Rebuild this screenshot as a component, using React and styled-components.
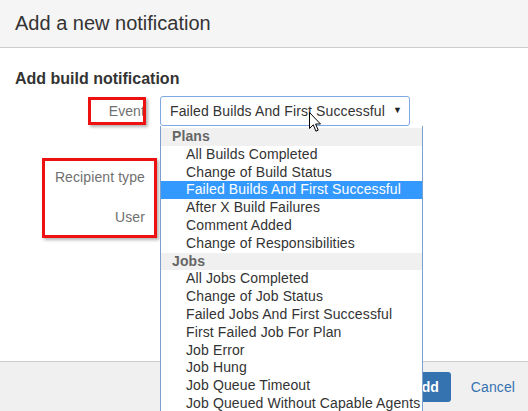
import React from "react";
import styled, { createGlobalStyle } from "styled-components";

const Global = createGlobalStyle`
  html, body { margin: 0; padding: 0; overflow: hidden; background: #fff; }
  body { font-family: "Liberation Sans", Arial, sans-serif; color: #333; }
  * { box-sizing: border-box; }
`;

const Dialog = styled.div`
  height: 411px;
  display: flex;
  flex-direction: column;
  position: relative;
`;

const Header = styled.header`
  height: 48px;
  background: #f5f5f5;
  border-bottom: 1px solid #cccccc;
  padding: 0 15px;
  display: flex;
  align-items: center;
`;

const Title = styled.h1`
  margin: 0;
  font-size: 20px;
  font-weight: normal;
  color: #333;
  line-height: 24px;
  padding-bottom: 2px;
`;

const Body = styled.div`
  flex: 1;
  padding: 21px 15px 0;
`;

const Heading = styled.h2`
  margin: 0 0 7px;
  font-size: 16px;
  font-weight: bold;
  line-height: 20px;
  color: #333;
`;

const Form = styled.div`
  position: relative;
  display: grid;
  grid-template-columns: 130px 1fr;
  column-gap: 15px;
`;

const Label = styled.div`
  text-align: right;
  font-size: 14px;
  letter-spacing: 0.1px;
  color: #707070;
  line-height: 30px;
  height: 30px;
  margin-top: ${(p) => p.$top || 0}px;
`;

const Field = styled.div`
  position: relative;
  height: 30px;
  margin-top: ${(p) => p.$top || 0}px;
`;

const Select = styled.div`
  width: 250px;
  height: 30px;
  border: 1px solid #7fa9e2;
  border-radius: 3px;
  background: #fff;
  display: flex;
  align-items: center;
  justify-content: space-between;
  padding: 0 7px 0 9px;
  font-size: 14px;
  letter-spacing: 0.12px;
  color: #333;
`;

const Arrow = styled.span`
  font-size: 9px;
  color: #222;
  margin-top: -2px;
`;

const Dropdown = styled.ul`
  position: absolute;
  top: 30px;
  left: 0;
  width: 263px;
  margin: 0;
  padding: 0;
  list-style: none;
  background: #fff;
  border: 1px solid #7d9fcf;
  border-top: none;
  z-index: 5;
  font-size: 14px;
  letter-spacing: 0.12px;
`;

const Group = styled.li`
  height: 17.8px;
  line-height: 17.8px;
  padding-left: 11px;
  background: #f0f0f0;
  color: #666;
  font-weight: bold;
  margin-top: ${(p) => (p.$first ? 2 : 0)}px;
`;

const Option = styled.li`
  height: 17.8px;
  line-height: 17.8px;
  padding-left: 25px;
  white-space: nowrap;
  color: ${(p) => (p.$selected ? "#fff" : "#333")};
  background: ${(p) => (p.$selected ? "#3399ff" : "transparent")};
`;

const Annotation = styled.div`
  position: absolute;
  left: ${(p) => p.$x}px;
  top: ${(p) => p.$y}px;
  width: ${(p) => p.$w}px;
  height: ${(p) => p.$h}px;
  border: 3px solid #ee1111;
  box-shadow: 2px 2px 3px rgba(0, 0, 0, 0.3);
  pointer-events: none;
  z-index: 2;
`;

const Cursor = styled.svg`
  position: absolute;
  left: 149px;
  top: 16px;
  z-index: 10;
`;

const Footer = styled.footer`
  height: 50px;
  background: #f0f0f0;
  border-top: 1px solid #cccccc;
  display: flex;
  justify-content: flex-end;
  align-items: flex-start;
  padding: 10px 13px 0 0;
  gap: 10px;
`;

const PrimaryButton = styled.button`
  height: 30px;
  padding: 0 12px;
  border: none;
  border-radius: 3px;
  background: #3572b0;
  color: #fff;
  font-family: "Liberation Sans", Arial, sans-serif;
  font-size: 14px;
  font-weight: bold;
`;

const LinkButton = styled.button`
  height: 30px;
  padding: 0 0 0 10px;
  border: none;
  background: transparent;
  color: #3572b0;
  font-family: "Liberation Sans", Arial, sans-serif;
  font-size: 14px;
  letter-spacing: 0.1px;
`;

const plans = [
  "All Builds Completed",
  "Change of Build Status",
  "Failed Builds And First Successful",
  "After X Build Failures",
  "Comment Added",
  "Change of Responsibilities",
];
const jobs = [
  "All Jobs Completed",
  "Change of Job Status",
  "Failed Jobs And First Successful",
  "First Failed Job For Plan",
  "Job Error",
  "Job Hung",
  "Job Queue Timeout",
  "Job Queued Without Capable Agents",
];

const selected = "Failed Builds And First Successful";

export default function App() {
  return (
    <>
      <Global />
      <Dialog>
        <Header>
          <Title>Add a new notification</Title>
        </Header>
        <Body>
          <Heading>Add build notification</Heading>
          <Form>
            <Label>Event</Label>
            <Field>
              <Select>
                <span>{selected}</span>
                <Arrow>▼</Arrow>
              </Select>
              <Dropdown>
                <Group $first>Plans</Group>
                {plans.map((p) => (
                  <Option key={p} $selected={p === selected}>
                    {p}
                  </Option>
                ))}
                <Group>Jobs</Group>
                {jobs.map((j) => (
                  <Option key={j}>{j}</Option>
                ))}
              </Dropdown>
              <Cursor width="13" height="21" viewBox="0 0 13 21">
                <path
                  d="M0.5 0.5 L0.5 16.5 L4.3 12.8 L6.9 19.2 L9.2 18.2 L6.6 12 L11.5 12 Z"
                  fill="#fff"
                  stroke="#000"
                  strokeWidth="1"
                  strokeLinejoin="miter"
                />
              </Cursor>
            </Field>
            <Label $top={36}>Recipient type</Label>
            <Field $top={36} />
            <Label $top={10}>User</Label>
            <Field $top={10} />
            <Annotation $x={73} $y={1} $w={58} $h={28} />
            <Annotation $x={27} $y={62} $w={115} $h={80} />
          </Form>
        </Body>
        <Footer>
          <PrimaryButton>Add</PrimaryButton>
          <LinkButton>Cancel</LinkButton>
        </Footer>
      </Dialog>
    </>
  );
}
